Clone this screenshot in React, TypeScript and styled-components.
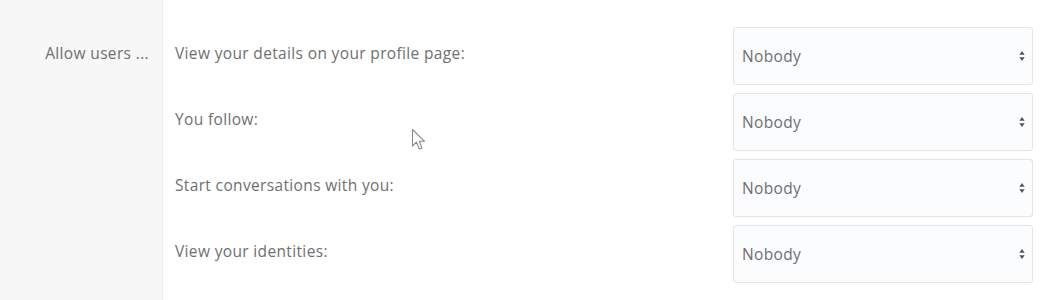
import styled, { createGlobalStyle } from 'styled-components';

const GlobalStyle = createGlobalStyle`
  html, body {
    margin: 0;
    padding: 0;
    background: #fff;
  }
  #root {
    height: 300px;
  }
`;

const Page = styled.div`
  position: relative;
  display: flex;
  height: 300px;
  font-family: 'Open Sans', 'Lato', sans-serif;
  font-size: 15.5px;
  letter-spacing: 0.35px;
  color: #6f6f6f;
  overflow: hidden;
`;

const Sidebar = styled.div`
  width: 163px;
  flex-shrink: 0;
  box-sizing: border-box;
  padding: 43px 13px 0 0;
  background: #f7f7f7;
  border-right: 1px solid #ededed;
  text-align: right;
  line-height: 20px;
`;

const Options = styled.div`
  flex: 1;
  display: grid;
  grid-template-columns: 1fr 300px;
  grid-auto-rows: 58px;
  row-gap: 8px;
  align-content: start;
  padding: 27px 11px 0 12px;
`;

const OptionLabel = styled.div`
  padding-top: 16px;
  line-height: 20px;
`;

const SelectWrap = styled.div`
  position: relative;
`;

const Select = styled.select`
  appearance: none;
  width: 100%;
  height: 100%;
  box-sizing: border-box;
  padding: 0 28px 0 8px;
  border: 1px solid #e4e4e4;
  border-radius: 3px;
  background: #fafcfe;
  font-family: inherit;
  font-size: 15.5px;
  letter-spacing: 0.35px;
  color: #6f6f6f;
  outline: none;
`;

const Arrows = styled.svg`
  position: absolute;
  right: 8px;
  top: 50%;
  transform: translateY(-50%);
  pointer-events: none;
`;

const Cursor = styled.svg`
  position: absolute;
  left: 411px;
  top: 128px;
  pointer-events: none;
`;

const OPTIONS = [
  'View your details on your profile page:',
  'You follow:',
  'Start conversations with you:',
  'View your identities:',
];

const App = () => (
  <>
    <GlobalStyle />
    <Page>
      <Sidebar>Allow users ...</Sidebar>
      <Options>
        {OPTIONS.map((label) => (
          <>
            <OptionLabel key={label}>{label}</OptionLabel>
            <SelectWrap key={label + '-select'}>
              <Select defaultValue="nobody">
                <option value="everyone">All visitors</option>
                <option value="members">Members only</option>
                <option value="followed">People you follow</option>
                <option value="nobody">Nobody</option>
              </Select>
              <Arrows width="6" height="11" viewBox="0 0 6 11">
                <path d="M3 0.5 L5.7 4.3 H0.3 Z" fill="#555" />
                <path d="M3 10.5 L5.7 6.7 H0.3 Z" fill="#555" />
              </Arrows>
            </SelectWrap>
          </>
        ))}
      </Options>
      <Cursor width="16" height="24" viewBox="0 0 16 24">
        <path
          d="M1.5 1.5 L1.5 18 L5.5 14.2 L8.4 21 L11 19.9 L8.2 13.3 L13.6 13.3 Z"
          fill="#fff"
          stroke="#888"
          strokeWidth="1.1"
          strokeLinejoin="round"
        />
      </Cursor>
    </Page>
  </>
);

export default App;
